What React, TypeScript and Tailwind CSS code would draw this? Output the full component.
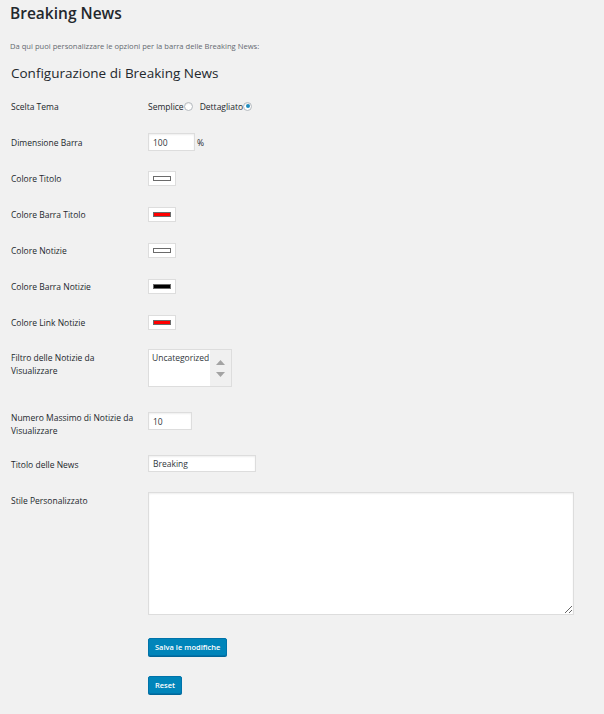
function ColorSwatch({ color }: { color: string }) {
  return (
    <button
      type="button"
      className="flex h-[15px] w-[28px] items-center justify-center border border-[#dddddd] bg-white"
    >
      <span className="block h-[5px] w-[18px] border border-[#6b6b6b]" style={{ backgroundColor: color }} />
    </button>
  );
}

function Radio({ checked }: { checked?: boolean }) {
  return (
    <span className="inline-flex h-[9px] w-[9px] items-center justify-center rounded-full border border-[#b4b9be] bg-white shadow-[inset_0_1px_1px_rgba(0,0,0,0.08)]">
      {checked && <span className="block h-[4px] w-[4px] rounded-full bg-[#1e8cbe]" />}
    </span>
  );
}

export default function App() {
  const colorRows = [
    { label: "Colore Titolo", color: "#ffffff" },
    { label: "Colore Barra Titolo", color: "#ff0000" },
    { label: "Colore Notizie", color: "#ffffff" },
    { label: "Colore Barra Notizie", color: "#000000" },
    { label: "Colore Link Notizie", color: "#ff0000" },
  ];

  return (
    <div className="min-h-screen bg-[#f1f1f1] pl-[10px] pt-[3px] text-[#23282d] font-['Open_Sans',sans-serif]">
      <h1 className="h-[20px] text-[15.5px] font-semibold leading-[20px]">Breaking News</h1>
      <p className="mt-[18px] text-[7.6px] leading-[10px] text-[#646970]">
        Da qui puoi personalizzare le opzioni per la barra delle Breaking News:
      </p>
      <h2 className="mt-[13px] pl-[1px] text-[13.5px] leading-[18px]">Configurazione di Breaking News</h2>

      <div className="mt-[6px] text-[8.5px] leading-[13px]">
        {/* Scelta Tema */}
        <div className="grid h-[36px] grid-cols-[138px_1fr] items-center">
          <div className="pl-[1px]">Scelta Tema</div>
          <div className="flex items-center">
            <span>Semplice</span>
            <Radio />
            <span className="ml-[7px]">Dettagliato</span>
            <Radio checked />
          </div>
        </div>

        {/* Dimensione Barra */}
        <div className="grid h-[36px] grid-cols-[138px_1fr] items-center">
          <div className="pl-[1px]">Dimensione Barra</div>
          <div className="flex items-center">
            <input
              defaultValue="100"
              className="h-[18px] w-[47px] border border-[#dddddd] bg-white px-[4px] text-[8.5px] text-[#32373c] shadow-[inset_0_1px_2px_rgba(0,0,0,0.07)] outline-none"
            />
            <span className="ml-[2px]">%</span>
          </div>
        </div>

        {colorRows.map((r) => (
          <div key={r.label} className="grid h-[36px] grid-cols-[138px_1fr] items-center">
            <div className="pl-[1px]">{r.label}</div>
            <div>
              <ColorSwatch color={r.color} />
            </div>
          </div>
        ))}

        {/* Filtro */}
        <div className="grid h-[63px] grid-cols-[138px_1fr] items-start">
          <div className="pl-[1px] pt-[11px]">
            Filtro delle Notizie da
            <br />
            Visualizzare
          </div>
          <div className="pt-[9px]">
            <div className="flex h-[38px] w-[84px] border border-[#dddddd] bg-white">
              <div className="flex-1 pl-[3px] pt-[1px] text-[#32373c]">Uncategorized</div>
              <div className="flex w-[21px] flex-col items-center justify-center gap-[7px] bg-[#f0f0f0]">
                <svg width="9" height="5" viewBox="0 0 9 5">
                  <path d="M0 5 L4.5 0 L9 5 Z" fill="#a3a3a3" />
                </svg>
                <svg width="9" height="5" viewBox="0 0 9 5">
                  <path d="M0 0 L9 0 L4.5 5 Z" fill="#a3a3a3" />
                </svg>
              </div>
            </div>
          </div>
        </div>

        {/* Numero Massimo */}
        <div className="grid h-[43px] grid-cols-[138px_1fr] items-start">
          <div className="pl-[1px] pt-[8px]">
            Numero Massimo di Notizie da
            <br />
            Visualizzare
          </div>
          <div className="pt-[9px]">
            <input
              defaultValue="10"
              className="h-[18px] w-[44px] border border-[#dddddd] bg-white px-[4px] text-[8.5px] text-[#32373c] shadow-[inset_0_1px_2px_rgba(0,0,0,0.07)] outline-none"
            />
          </div>
        </div>

        {/* Titolo delle News */}
        <div className="grid h-[37px] grid-cols-[138px_1fr] items-start">
          <div className="pl-[1px] pt-[12px]">Titolo delle News</div>
          <div className="pt-[9px]">
            <input
              defaultValue="Breaking"
              className="h-[17px] w-[108px] border border-[#dddddd] bg-white px-[4px] text-[8.5px] text-[#32373c] shadow-[inset_0_1px_2px_rgba(0,0,0,0.07)] outline-none"
            />
          </div>
        </div>

        {/* Stile Personalizzato */}
        <div className="grid grid-cols-[138px_1fr] items-start">
          <div className="pl-[1px] pt-[11px]">Stile Personalizzato</div>
          <div className="pt-[9px]">
            <textarea className="block h-[123px] w-[426px] border border-[#dddddd] bg-white shadow-[inset_0_1px_2px_rgba(0,0,0,0.07)] outline-none" />
          </div>
        </div>

        {/* Buttons */}
        <div className="ml-[138px] mt-[23px] flex flex-col items-start gap-[20px]">
          <button
            type="button"
            className="h-[18px] rounded-[2px] border border-[#0073aa] bg-[#0085ba] px-[6px] text-[7.5px] font-semibold leading-[16px] text-white shadow-[0_1px_0_#006799]"
          >
            Salva le modifiche
          </button>
          <button
            type="button"
            className="h-[18px] rounded-[2px] border border-[#0073aa] bg-[#0085ba] px-[6px] text-[7.5px] font-semibold leading-[16px] text-white shadow-[0_1px_0_#006799]"
          >
            Reset
          </button>
        </div>
      </div>
    </div>
  );
}
